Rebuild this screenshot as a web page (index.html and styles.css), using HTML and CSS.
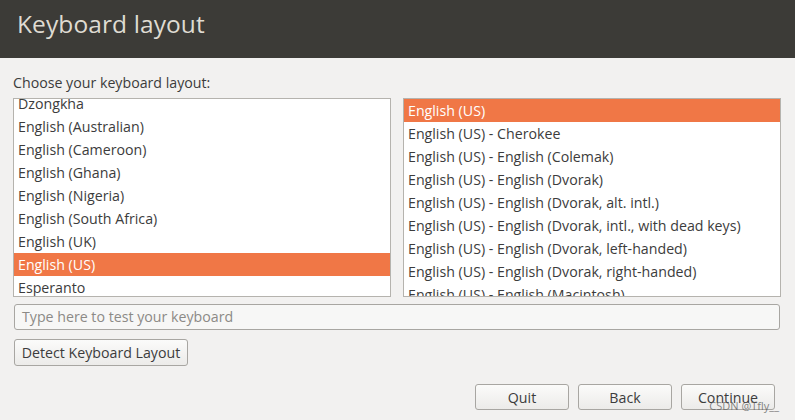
FILE: index.html
```html
<!DOCTYPE html>
<html>
<head>
<meta charset="utf-8">
<link rel="stylesheet" href="styles.css">
</head>
<body>
<div class="window">
  <header class="header"><h1 class="title">Keyboard layout</h1></header>
  <main class="content">
    <div class="label">Choose your keyboard layout:</div>
    <div class="lists">
      <div class="list">
        <ul class="rows rows-scrolled">
          <li>Dzongkha</li>
          <li>English (Australian)</li>
          <li>English (Cameroon)</li>
          <li>English (Ghana)</li>
          <li>English (Nigeria)</li>
          <li>English (South Africa)</li>
          <li>English (UK)</li>
          <li class="selected">English (US)</li>
          <li>Esperanto</li>
          <li>Estonian</li>
        </ul>
      </div>
      <div class="list">
        <ul class="rows">
          <li class="selected">English (US)</li>
          <li>English (US) - Cherokee</li>
          <li>English (US) - English (Colemak)</li>
          <li>English (US) - English (Dvorak)</li>
          <li>English (US) - English (Dvorak, alt. intl.)</li>
          <li>English (US) - English (Dvorak, intl., with dead keys)</li>
          <li>English (US) - English (Dvorak, left-handed)</li>
          <li>English (US) - English (Dvorak, right-handed)</li>
          <li>English (US) - English (Macintosh)</li>
        </ul>
      </div>
    </div>
    <div class="test-input">Type here to test your keyboard</div>
    <div class="detect-row"><button class="btn detect">Detect Keyboard Layout</button></div>
    <div class="actions">
      <button class="btn action">Quit</button>
      <button class="btn action">Back</button>
      <button class="btn action">Continue</button>
    </div>
  </main>
  <div class="watermark">CSDN @Tfly__</div>
</div>
</body>
</html>
```
FILE: styles.css
```css
* { box-sizing: border-box; }
html, body {
  margin: 0;
  padding: 0;
  background: #f2f1f0;
  width: 795px;
  height: 420px;
  overflow: hidden;
}
body {
  font-family: "Open Sans", "DejaVu Sans", sans-serif;
  color: #3c3c3c;
}
.window {
  position: relative;
  width: 795px;
  height: 420px;
}
.header {
  height: 58px;
  background: #3c3b37;
  padding: 7px 0 0 17px;
}
.title {
  margin: 0;
  font-weight: 400;
  font-size: 24.5px;
  line-height: 34px;
  color: #dfdbd2;
  letter-spacing: 0.1px;
}
.content {
  padding: 0 14px 0 13px;
  display: flex;
  flex-direction: column;
}
.label {
  margin-top: 15px;
  height: 25px;
  font-size: 14.2px;
  line-height: 20px;
  color: #3c3c3c;
}
.lists {
  display: flex;
  gap: 12px;
}
.list {
  width: 378px;
  height: 199px;
  border: 1px solid #b5b3ae;
  background: #ffffff;
  overflow: hidden;
}
.rows {
  list-style: none;
  margin: 0;
  padding: 0;
}
.rows-scrolled {
  margin-top: -7px;
}
.rows li {
  height: 23px;
  line-height: 23px;
  padding-left: 4px;
  font-size: 14.2px;
  color: #3c3c3c;
  white-space: nowrap;
}
.rows li.selected {
  background: #f07746;
  color: #ffffff;
}
.test-input {
  margin: 7px 1px 0 1px;
  height: 26px;
  border: 1px solid #a8a6a2;
  border-radius: 3px;
  background: #f7f7f6;
  padding-left: 7px;
  font-size: 14.2px;
  line-height: 24px;
  color: #8c8a86;
}
.detect-row {
  margin-top: 9px;
  padding-left: 1px;
}
.btn {
  font-family: inherit;
  font-size: 14.2px;
  color: #3c3c3c;
  border: 1px solid #a8a6a2;
  border-radius: 3px;
  background: linear-gradient(#fbfbfa, #ecebe9);
  height: 27px;
  padding: 0;
}
.detect {
  width: 174px;
  text-align: center;
}
.actions {
  margin-top: 18px;
  display: flex;
  justify-content: flex-end;
  gap: 9px;
  padding-right: 6px;
}
.action {
  width: 94px;
  height: 26px;
}
.watermark {
  position: absolute;
  right: 16px;
  bottom: 7px;
  font-size: 11px;
  color: rgba(90, 90, 90, 0.75);
}
```
